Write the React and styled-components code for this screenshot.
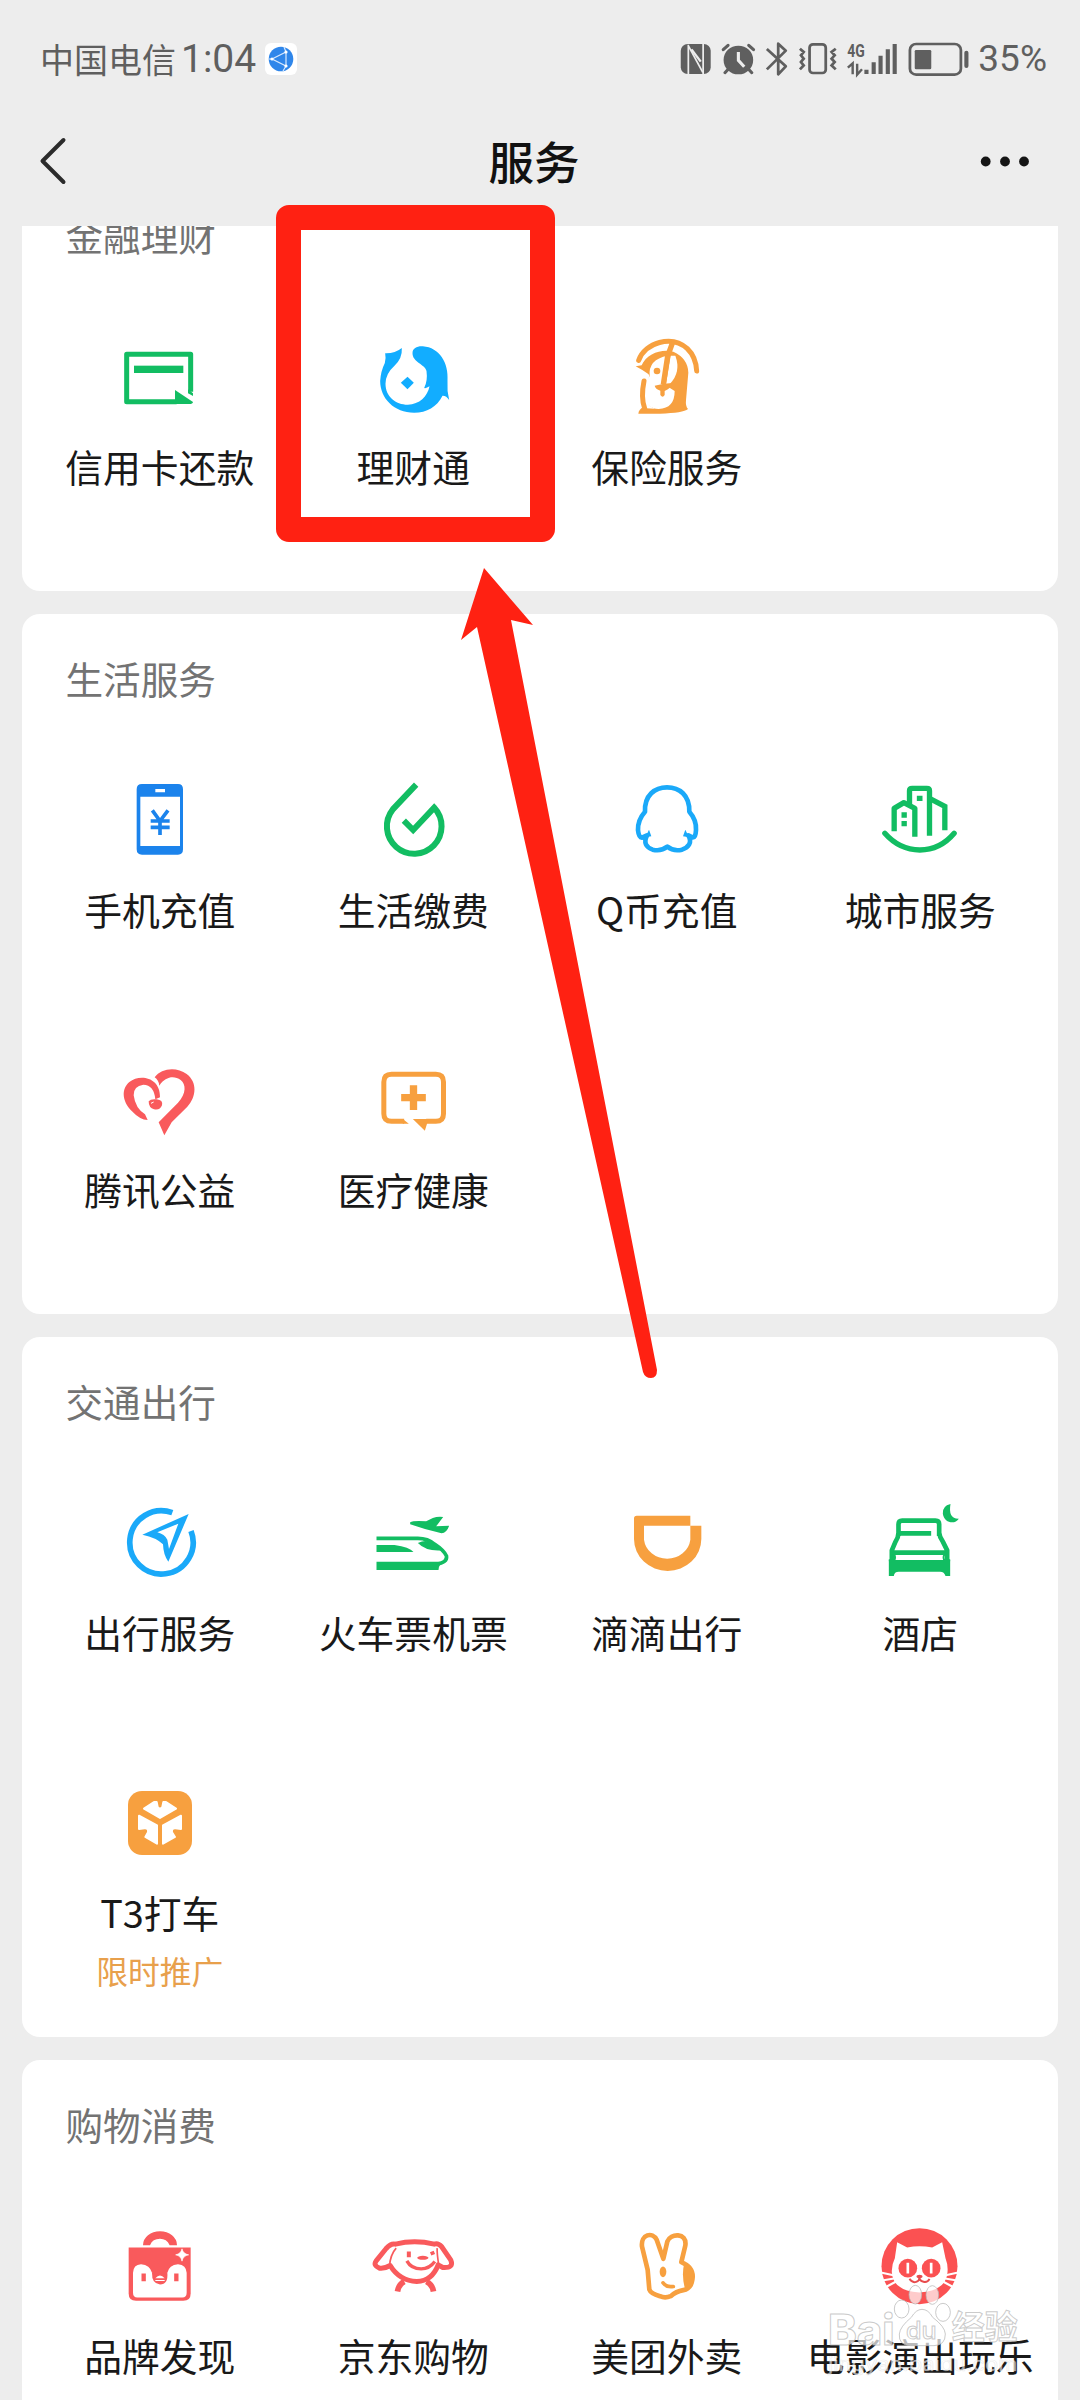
import React from "react";
import styled, { createGlobalStyle } from "styled-components";

const GREEN = "#12bd62";
const BLUE = "#1aa9f9";
const DEEP = "#1b83ec";
const ORANGE = "#f7a03f";
const RED = "#f95a5c";
const GREY = "#5f5f5f";
const MARK = "#ff2112";

const GlobalStyle = createGlobalStyle`
  * { box-sizing: border-box; }
  body { margin: 0; background: #ededed; }
`;

const Screen = styled.div`
  position: relative;
  width: 1080px;
  height: 2400px;
  overflow: hidden;
  display: flex;
  flex-direction: column;
  background: #ededed;
  color: #191919;
  font-family: "Noto Sans CJK SC", sans-serif;
`;

const StatusBar = styled.div`
  flex: none;
  height: 96px;
  padding: 21px 33px 0 40px;
  display: flex;
  align-items: center;
  justify-content: space-between;
  color: ${GREY};
`;

const StatusGroup = styled.div`
  display: flex;
  align-items: center;
`;

const Carrier = styled.span`
  font-size: 34px;
  line-height: 40px;
  margin-right: 5px;
`;

const Figures = styled.span`
  font-family: Roboto, sans-serif;
  font-size: ${(p) => p.$size}px;
  line-height: 40px;
  margin-left: ${(p) => p.$before || 0}px;
  margin-right: ${(p) => p.$after || 0}px;
`;

const StatusSvg = styled.svg`
  display: block;
  flex: none;
  width: ${(p) => p.$w}px;
  height: 38px;
`;

const NavBar = styled.div`
  flex: none;
  height: 130px;
  padding: 0 47px 0 35px;
  display: grid;
  grid-template-columns: 1fr auto 1fr;
  align-items: center;
`;

const NavTitle = styled.h1`
  margin: 0 0 2px;
  font-size: 45.5px;
  line-height: 60px;
  font-weight: 500;
  color: #111;
`;

const NavIcon = styled.svg`
  display: block;
  width: ${(p) => p.$w}px;
  height: 60px;
  justify-self: ${(p) => p.$side};
`;

const Scroll = styled.main`
  flex: 1;
  min-height: 0;
  overflow: hidden;
  padding: 0 22px;
`;

const Feed = styled.div`
  margin-top: -55px;
  display: flex;
  flex-direction: column;
  gap: 23px;
`;

const Card = styled.section`
  background: #fff;
  border-radius: 18px;
  padding: 39px 11px 0;
  height: ${(p) => 140 + p.$rows * 280}px;
`;

const CardTitle = styled.h2`
  margin: 0 0 68.500px;
  padding-left: 32.500px;
  font-size: 37.600px;
  line-height: 50px;
  font-weight: 400;
  color: #737373;
`;

const Grid = styled.div`
  display: grid;
  grid-template-columns: repeat(4, 253.5px);
  grid-auto-rows: 280px;
`;

const Cell = styled.div`
  display: flex;
  flex-direction: column;
  align-items: center;
`;

const IconBox = styled.svg`
  display: block;
  width: 96px;
  height: 96px;
  overflow: visible;
`;

const Label = styled.span`
  margin-top: 16px;
  font-size: 37.8px;
  line-height: 50px;
  white-space: nowrap;
`;

const Promo = styled.span`
  margin-top: 11px;
  font-size: 31.8px;
  line-height: 44px;
  color: #e8a04c;
`;

const Highlight = styled.div`
  position: absolute;
  left: 276px;
  top: 205px;
  width: 279px;
  height: 337px;
  border-radius: 13px;
  border: 25px solid ${MARK};
`;

const Pointer = styled.svg`
  position: absolute;
  left: 440px;
  top: 560px;
  width: 240px;
  height: 830px;
`;

const Watermark = styled.svg`
  position: absolute;
  left: 820px;
  top: 2280px;
  width: 210px;
  height: 100px;
`;

/* Every drawing below uses three units per pixel. */
const icons = {
  credit: {
    box: "156 24 288 288",
    art: (
      <g fill={GREEN}>
        <path d="M392 212V100H200V242H350" fill="none" stroke={GREEN} strokeWidth="15" strokeLinejoin="round" />
        <path d="M384 205l15 12v8l-15-8z" />
        <rect x="222" y="134" width="148" height="22" />
        <path d="M345 207L399 243Q398 249 388 249H345z" />
      </g>
    ),
  },
  wealth: {
    box: "76.5 24 288 288",
    art: (
      <g fill="#12adff">
        <path d="M137 97Q166 98 187 81Q189 112 165 134Q138 158 138 188C138 226 168 251 205 251C240 251 264 226 270 196Q260 203 254 201Q265 180 261 150C256 130 219 124 219 97C219 81 233 75 250 76C300 80 328 125 324 180Q322 210 329 237Q320 223 309 224C292 258 262 275 224 275C164 275 122 232 122 180Q124 150 136 126Q140 112 137 97Z" />
        <path d="M204 167l19 18-19 20-20-20z" />
      </g>
    ),
  },
  insurance: {
    box: "837 24 288 288",
    art: (
      <g>
        <path d="M887 136L905 133C920 98 965 83 1000 92Q1044 112 1045 155L1038 238Q1036 256 1044 264Q1030 276 960 278H895Q896 264 912 257L905 232L912 182L925 180L926 160Q910 148 887 136Z" fill={ORANGE} />
        <path d="M896 157L928 162L923 184L922 232Q922 256 945 263L918 262Q898 240 900 180Z" fill="#fff" />
        <path d="M929 165Q924 115 983 104L972 190L1004 210Q1004 262 956 264Q918 262 918 225L921 176Z" fill="#fff" />
        <path d="M1006 104Q1024 152 990 188L978 190L992 104Z" fill="#fff" />
        <path d="M896 118C915 65 995 40 1042 83Q1068 108 1070 150" stroke="#fff" strokeWidth="28" fill="none" />
        <path d="M896 118C915 65 995 40 1042 83Q1068 108 1070 150" stroke={ORANGE} strokeWidth="15" strokeLinecap="round" fill="none" />
        <path d="M998 64L983 105L970 190" stroke={ORANGE} strokeWidth="16" fill="none" />
        <path d="M912 180Q902 230 914 262" stroke={ORANGE} strokeWidth="15" strokeLinecap="round" fill="none" />
        <circle cx="951" cy="150" r="10" fill={ORANGE} />
        <path d="M944 194Q970 186 1000 186Q992 202 974 210V222Q968 232 961 222V209Q946 204 944 194Z" fill={ORANGE} />
      </g>
    ),
  },
  phone: {
    box: "96 36 288 288",
    art: (
      <g>
        <path fillRule="evenodd" d="M186 72H294Q309 72 309 88V268Q309 284 294 284H186Q170 284 170 268V88Q170 72 186 72ZM181 110V258H300V110ZM226 87V97H255V87Z" fill={DEEP} />
        <path d="M217 151L240 183L264 151M240 182V225M212 183H269M212 202H269" stroke={DEEP} strokeWidth="11" fill="none" />
      </g>
    ),
  },
  bills: {
    box: "856.5 36 288 288",
    art: (
      <path d="M1010 74L940 148A82 82 0 1 0 1064 143L1001 210L973 182" fill="none" stroke={GREEN} strokeWidth="18" />
    ),
  },
  qcoin: {
    box: "117 36 288 288",
    art: (
      <g fill="none" stroke={BLUE} strokeWidth="14" strokeLinejoin="round">
        <path d="M195 155C193 105 225 82 261 82C298 82 329 105 328 155Q350 180 348 210Q347 234 337 232L325 226C338 248 325 262 306 269Q280 275 262 260Q243 275 218 269C198 262 190 248 201 226L186 233Q176 232 174 210Q173 180 195 155Z" />
        <path d="M207 209L214 229L196 232Z M316 209L309 229L327 232Z" fill={BLUE} stroke="none" />
      </g>
    ),
  },
  city: {
    box: "877.5 36 288 288",
    art: (
      <g fill="none" stroke={GREEN} strokeWidth="16">
        <path d="M916 220Q960 270 1021 270Q1082 270 1124 220" strokeLinecap="round" />
        <path d="M944 214V145L973 128L1006 145V230" strokeLinejoin="round" />
        <path d="M990 138V92Q990 85 998 85H1042Q1050 85 1050 92V227" />
        <path d="M1050 115L1096 139V211" />
        <path d="M966 165h16M966 191h16M1012 115h17" />
      </g>
    ),
  },
  charity: {
    box: "96 36 288 288",
    art: (
      <g fill={RED}>
        <path d="M203 240Q180 240 156 214C124 182 125 145 148 126C180 100 242 112 240 172L226 178Q222 135 190 134Q160 138 161 166Q166 205 195 223Z" />
        <path d="M224 112C244 84 290 80 320 102C352 126 350 170 322 200L275 247L253 286L236 247L294 188C320 160 318 132 302 120C282 106 256 110 238 137Q236 120 224 112Z" />
        <path d="M206 184Q212 176 230 178Q250 180 246 196Q240 212 222 208Q206 204 206 184Z" />
        <path d="M213 190l8-4" stroke="#fff" strokeWidth="3" />
      </g>
    ),
  },
  medical: {
    box: "856.5 36 288 288",
    art: (
      <g>
        <path d="M974 244H936Q913 244 913 221V126Q913 103 936 103H1069Q1092 103 1092 126V221Q1092 244 1069 244H1040" fill="none" stroke={ORANGE} strokeWidth="15" />
        <path d="M970 237L988 251H970ZM1000 237H1047L1036 272Z" fill={ORANGE} />
        <path d="M1002 136V210M965 173H1039" stroke={ORANGE} strokeWidth="22" />
      </g>
    ),
  },
  travel: {
    box: "96 42 288 288",
    art: (
      <g fill="none" stroke={BLUE} strokeWidth="17">
        <path d="M277 95A95 95 0 1 0 333 150" />
        <path fill={BLUE} fillRule="evenodd" stroke="none" d="M326 99L265 242Q250 222 249 190Q230 170 187 161ZM295 128L232 154Q254 160 262 176L267 204Z" />
      </g>
    ),
  },
  train: {
    box: "856.5 42 288 288",
    art: (
      <g fill={GREEN}>
        <path d="M891 172H1015Q1045 172 1066 190Q1092 207 1101 225Q1104 245 1070 250" fill="none" stroke={GREEN} strokeWidth="11" />
        <path d="M1015 186Q1040 174 1058 186L1088 208Q1040 212 1015 186Z" />
        <path d="M891 192H945Q990 198 1002 213H891ZM891 242H1095Q1076 250 1077 267H891Z" />
        <path d="M992 124Q1002 118 1040 121L1060 111Q1074 106 1091 108L1070 136L1109 134Q1102 155 1086 157Q1040 147 992 130Z" />
      </g>
    ),
  },
  didi: {
    box: "117 42 288 288",
    art: (
      <path d="M170 104H331V134H192V176A70 65 0 0 0 331 176V134H364V174A101 96 0 0 1 162 174V112Q162 104 170 104Z" fill={ORANGE} />
    ),
  },
  hotel: {
    box: "877.5 42 288 288",
    art: (
      <g fill="none" stroke={GREEN} strokeWidth="14" strokeLinejoin="round">
        <path d="M957 165V130Q957 119 968 119H1068Q1079 119 1079 130V165M957 157H1055M957 155Q957 168 948 182L937 208V240M1079 155Q1080 168 1090 182L1103 208V240M940 215H1100" />
        <path d="M928 238L945 237Q950 226 940 214M1112 238L1094 237Q1088 226 1100 214" strokeWidth="6" />
        <path d="M928 237H1112V285H1098Q1094 271 1080 272H958Q944 272 943 285H928Z" fill={GREEN} stroke="none" />
        <path d="M1113 69Q1088 75 1090 98C1094 126 1126 132 1138 113Q1105 114 1113 69Z" fill={GREEN} stroke="none" />
      </g>
    ),
  },
  t3: {
    box: "156 42 288 288",
    art: (
      <g>
        <rect x="204" y="90" width="192" height="192" rx="42" fill={ORANGE} />
        <g fill="#fff" stroke="#fff" strokeWidth="6" strokeLinejoin="round">
          <path d="M252 143L282 123H290L293 138Q300 147 307 138L310 123H318L348 143L300 171Z" />
          <path d="M237 164L291 193V248L256 228L264 214Q266 201 254 202L237 204Z" />
          <path d="M363 164L309 193V248L345 228L336 214Q334 201 346 202L363 204Z" />
        </g>
      </g>
    ),
  },
  brand: {
    box: "156 49.5 288 288",
    art: (
      <g>
        <path d="M249 131A51 42 0 0 1 351 131H329Q320 112 300 112Q278 112 270 131Z" fill={RED} />
        <path d="M206 138H392V276Q392 298 370 298H228Q206 298 206 276Z" fill={RED} />
        <path d="M219 214Q220 189 243 188Q270 190 276 214Q300 222 322 214Q327 190 354 188Q379 190 380 214V274Q380 288 367 288H232Q219 288 219 274Z" fill="#fff" />
        <path d="M276 214Q300 200 322 214Q325 249 300 249Q275 247 276 214Z" fill={RED} />
        <path d="M286 230Q300 214 314 230Z" fill="#fff" />
        <path d="M286 237H314" stroke="#fff" strokeWidth="3" />
        <path d="M251 216V239M349 216V239" stroke={RED} strokeWidth="13" />
        <path d="M366 142Q369 157 386 160Q369 163 366 179Q363 163 347 160Q363 157 366 142Z" fill="#fff" stroke="#fff" strokeWidth="2" />
      </g>
    ),
  },
  jd: {
    box: "916.5 49.5 288 288",
    art: (
      <g fill="none" stroke={RED} strokeWidth="15" strokeLinejoin="round">
        <path d="M1008 128Q1065 114 1124 128Q1136 124 1146 135L1174 176Q1184 200 1150 198L1136 190Q1118 238 1072 240Q1020 238 992 192Q975 202 960 200Q940 192 950 178L980 141Q995 124 1008 128Z" />
        <path d="M990 195Q992 160 1010 140M1133 140Q1132 155 1138 192" strokeWidth="5" />
        <path d="M1042 178Q1055 202 1085 202Q1110 202 1126 180" strokeWidth="10" />
        <path d="M1048 150V167M1117 150L1121 160" strokeWidth="12" />
        <ellipse cx="1090" cy="169" rx="17" ry="6" fill={RED} stroke="none" />
        <path d="M1034 240Q1017 250 1014 270M1101 240Q1119 250 1122 270" strokeWidth="17" />
      </g>
    ),
  },
  meituan: {
    box: "117 49.5 288 288",
    art: (
      <g>
        <path d="M208 264L203 205L186 135C182 98 218 90 230 115L250 172L262 120C270 95 322 92 316 132L304 182Q338 196 338 225Q336 262 310 266Q288 270 272 284Q255 291 240 284Q212 276 208 264Z" fill="none" stroke={ORANGE} strokeWidth="14" strokeLinejoin="round" />
        <path d="M312 188Q304 225 316 266Q345 252 343 222Q340 198 312 188Z" fill={ORANGE} />
        <ellipse cx="249" cy="211" rx="10" ry="16" fill={ORANGE} />
        <path d="M249 244Q258 258 280 255" fill="none" stroke={ORANGE} strokeWidth="11" strokeLinecap="round" />
      </g>
    ),
  },
  movie: {
    box: "877.5 49.5 288 288",
    art: (
      <g>
        <circle cx="1020" cy="194" r="114" fill="#fb5152" />
        <path d="M953 122L983 138Q1020 130 1058 138L1088 122L1098 170Q1106 190 1104 212Q1100 268 1020 273Q940 268 937 212Q936 190 946 170Z" fill="#fff" />
        <path d="M904 213L945 222M912 236L948 230M922 255L950 240M1136 213L1095 222M1128 236L1092 230M1118 255L1090 240" stroke="#fff" strokeWidth="6" />
        <circle cx="985" cy="200" r="28" fill="#fb5152" />
        <circle cx="1055" cy="200" r="28" fill="#fb5152" />
        <path d="M985 184V216M1055 184V216" stroke="#fff" strokeWidth="8" />
        <path d="M990 232Q998 245 1010 241Q1020 238 1020 228Q1020 238 1032 241Q1044 244 1050 232" fill="none" stroke="#e84b4d" strokeWidth="6" />
        <ellipse cx="1020" cy="225" rx="9" ry="5" fill="#e84b4d" />
      </g>
    ),
  },
};

const sections = [
  {
    title: "金融理财",
    rows: 1,
    items: [
      ["credit", "信用卡还款"],
      ["wealth", "理财通"],
      ["insurance", "保险服务"],
    ],
  },
  {
    title: "生活服务",
    rows: 2,
    items: [
      ["phone", "手机充值"],
      ["bills", "生活缴费"],
      ["qcoin", "Q币充值"],
      ["city", "城市服务"],
      ["charity", "腾讯公益"],
      ["medical", "医疗健康"],
    ],
  },
  {
    title: "交通出行",
    rows: 2,
    items: [
      ["travel", "出行服务"],
      ["train", "火车票机票"],
      ["didi", "滴滴出行"],
      ["hotel", "酒店"],
      ["t3", "T3打车", "限时推广"],
    ],
  },
  {
    title: "购物消费",
    rows: 2,
    items: [
      ["brand", "品牌发现"],
      ["jd", "京东购物"],
      ["meituan", "美团外卖"],
      ["movie", "电影演出玩乐"],
    ],
  },
];

function Service({ icon, label, promo }) {
  return (
    <Cell>
      <IconBox viewBox={icons[icon].box}>{icons[icon].art}</IconBox>
      <Label>{label}</Label>
      {promo && <Promo>{promo}</Promo>}
    </Cell>
  );
}

function StatusIcon({ from, to, children }) {
  return (
    <StatusSvg $w={(to - from) / 2.9037} viewBox={`${from} 117 ${to - from} 114`} preserveAspectRatio="none">
      {children}
    </StatusSvg>
  );
}

function StatusIcons() {
  return (
    <>
      <StatusIcon from={400} to={510}>
        <rect x="408" y="129" width="87" height="90" rx="20" fill={GREY} />
        <path d="M430 219V131M473 219V129" fill="none" stroke="#ededed" strokeWidth="5" />
        <path d="M431 136L472 214" fill="none" stroke="#ededed" strokeWidth="5" />
        <path d="M439 145L466 182" stroke="#ededed" strokeWidth="7" />
      </StatusIcon>
      <StatusIcon from={510} to={640}>
        <circle cx="575" cy="177" r="43" fill={GREY} />
        <path d="M531 146L545 133M619 146L605 133M546 204L536 215M604 204L614 215" stroke={GREY} strokeWidth="9" strokeLinecap="round" />
        <path d="M575 153V178L592 197" fill="none" stroke="#ededed" strokeWidth="9" />
      </StatusIcon>
      <StatusIcon from={640} to={730}>
        <path d="M657 144L712 196L690 220V128L712 149L657 205" fill="none" stroke={GREY} strokeWidth="8" strokeLinejoin="round" />
      </StatusIcon>
      <StatusIcon from={730} to={875}>
        <rect x="781" y="130" width="47" height="86" rx="10" fill="none" stroke={GREY} strokeWidth="8" />
        <path d="M753 143L764 153L756 163L764 173L756 183L764 193L753 205M857 143L845 153L854 163L845 173L854 183L845 193L857 205" fill="none" stroke={GREY} strokeWidth="8" />
      </StatusIcon>
      <StatusIcon from={875} to={1050}>
        <text x="890" y="169" fontFamily="Roboto, sans-serif" fontWeight="700" fontSize="55" fill={GREY} textLength="51" lengthAdjust="spacingAndGlyphs">4G</text>
        <path d="M892 200L906 187V220M919 188V221L933 205" fill="none" stroke={GREY} strokeWidth="7" />
        <path d="M946 206V219M967 184V219M987 164V219M1008 145V219M1028 129V219" stroke={GREY} strokeWidth="12" />
      </StatusIcon>
      <StatusIcon from={1050} to={1260}>
        <rect x="1073" y="129" width="148" height="92" rx="18" fill="none" stroke={GREY} strokeWidth="8" />
        <rect x="1087" y="147" width="48" height="58" rx="4" fill={GREY} />
        <path d="M1237 155V195" stroke={GREY} strokeWidth="12" strokeLinecap="round" />
      </StatusIcon>
    </>
  );
}

export default function App() {
  return (
    <Screen>
      <GlobalStyle />
      <StatusBar>
        <StatusGroup>
          <Carrier>中国电信</Carrier>
          <Figures $size={39} $after={8}>1:04</Figures>
          <StatusSvg $w={34} viewBox="0 0 34 38">
            <rect x="1" y="3" width="32" height="32" rx="6" fill="#fff" />
            <circle cx="17" cy="19" r="12.3" fill="#2f86ea" />
            <path d="M8 19L22 12V26ZM22 12L20 7M22 26L19 31M8 19H5" fill="none" stroke="#d8e9ff" strokeWidth="1.2" />
            <circle cx="8" cy="19" r="1.6" fill="#fff" />
            <circle cx="22" cy="12" r="1.6" fill="#fff" />
            <circle cx="22" cy="26" r="1.6" fill="#fff" />
          </StatusSvg>
        </StatusGroup>
        <StatusGroup>
          <StatusIcons />
          <Figures $size={37} $before={4}>35%</Figures>
        </StatusGroup>
      </StatusBar>
      <NavBar>
        <NavIcon $w={40} $side="start" viewBox="35 131 40 60">
          <path d="M63.5 140L42.5 161L63.5 182" fill="none" stroke="#2b2b2b" strokeWidth="4" strokeLinecap="round" strokeLinejoin="round" />
        </NavIcon>
        <NavTitle>服务</NavTitle>
        <NavIcon $w={60} $side="end" viewBox="973 131 60 60">
          <circle cx="985.7" cy="161.5" r="4.9" fill="#151515" />
          <circle cx="1005" cy="161.5" r="4.9" fill="#151515" />
          <circle cx="1024" cy="161.5" r="4.9" fill="#151515" />
        </NavIcon>
      </NavBar>
      <Scroll>
        <Feed>
          {sections.map((s) => (
            <Card key={s.title} $rows={s.rows}>
              <CardTitle>{s.title}</CardTitle>
              <Grid>
                {s.items.map(([icon, label, promo]) => (
                  <Service key={icon} icon={icon} label={label} promo={promo} />
                ))}
              </Grid>
            </Card>
          ))}
        </Feed>
      </Scroll>
      <Highlight />
      <Pointer viewBox="440 560 240 830">
        <path d="M484 568L533 625L511 620L657 1370Q657 1378 651 1378Q645 1378 643 1372L477 627L461 640Z" fill={MARK} />
      </Pointer>
      <Watermark viewBox="720 240 630 300">
        <g fill="#fff" fillOpacity="0.7" stroke="#b4b4b4" strokeOpacity="0.7" strokeWidth="3">
          <ellipse cx="1006" cy="284" rx="19" ry="28" />
          <ellipse cx="1057" cy="285" rx="19" ry="28" />
          <ellipse cx="965" cy="327" rx="22" ry="27" />
          <ellipse cx="1089" cy="337" rx="22" ry="27" />
          <path d="M1026 328Q1045 328 1058 352Q1095 380 1096 402Q1096 436 1062 437H992Q955 436 958 402Q960 380 994 352Q1008 328 1026 328Z" />
          <text x="744" y="434" fontFamily="Inter, sans-serif" fontWeight="800" fontSize="126" textLength="200" lengthAdjust="spacingAndGlyphs">Bai</text>
          <text x="978" y="418" fontFamily="Inter, sans-serif" fontWeight="500" fontSize="72" textLength="92" lengthAdjust="spacingAndGlyphs">du</text>
          <text x="1115" y="416" fontFamily="Noto Sans CJK SC, sans-serif" fontWeight="700" fontSize="98" textLength="198" lengthAdjust="spacingAndGlyphs">经验</text>
        </g>
        <text x="744" y="512" fontFamily="Inter, sans-serif" fontSize="58" fill="#fff" fillOpacity="0.6" stroke="#c8c8c8" strokeOpacity="0.35" strokeWidth="2" textLength="568" lengthAdjust="spacingAndGlyphs">jingyan.baidu.com</text>
      </Watermark>
    </Screen>
  );
}
